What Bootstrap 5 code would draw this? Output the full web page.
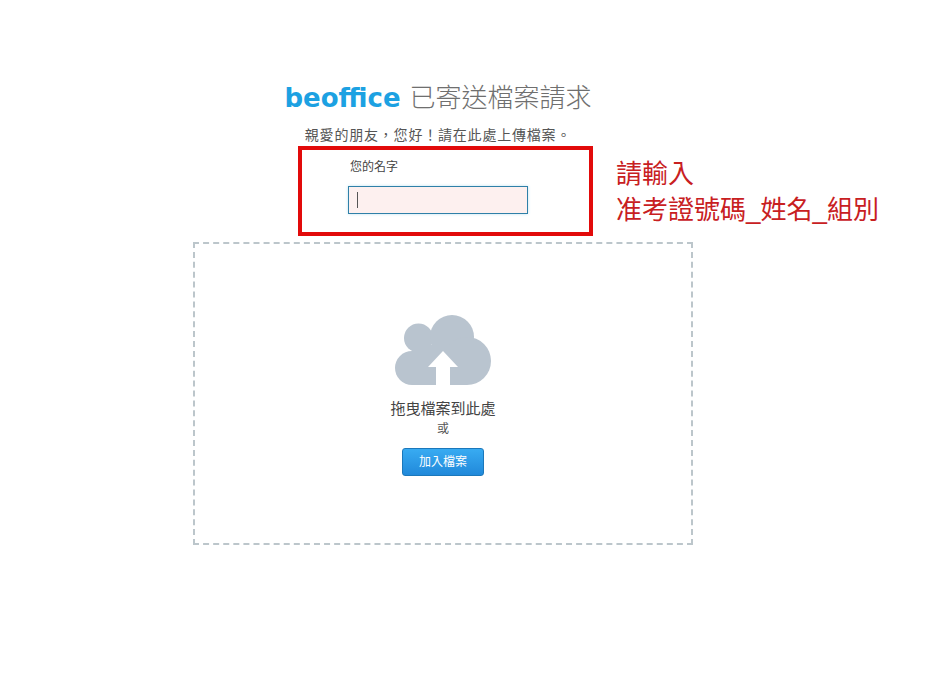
<!DOCTYPE html>
<html lang="zh-Hant">
<head>
<meta charset="utf-8">
<title>beoffice</title>
<link href="https://cdn.jsdelivr.net/npm/bootstrap@5.3.0/dist/css/bootstrap.min.css" rel="stylesheet">
<style>
html,body{height:100%;background:#fff}
body{font-family:"Liberation Sans","Noto Sans CJK TC",sans-serif;color:#444;overflow:hidden}
.sheet{position:relative;width:931px;height:700px;padding:79px 238px 0 193px}
.head-title{font-size:26px;line-height:38px;font-weight:300;color:#6f6f6f;margin:0 10px 0 0;text-align:center}
.brand-word{font-family:"DejaVu Sans",sans-serif;font-weight:700;font-size:26px;color:#1ca1e2;margin-right:9px}
.greet{font-size:14px;letter-spacing:.8px;line-height:20px;color:#555;margin:8px 0 0;padding-right:10px;text-align:center}
.name-zone{height:97px;padding:12px 0 0 155px}
.name-label{display:block;font-size:12px;line-height:20px;margin:0 0 9px 2px;color:#444}
.name-input{position:relative;width:180px;height:28px}
.name-input .form-control{height:28px;width:180px;border:1px solid #2f80a8;border-radius:0;background:#fdf0ef;box-shadow:0 0 3px #bfe3f2;padding:0}
.caret-bar{position:absolute;left:9px;top:6px;width:1px;height:16px;background:#555}
.drop-zone{width:500px;height:303px;border:2px dashed #bcc6cb;padding-top:71px}
.cloud-art{display:block;width:96px;height:70px;margin-bottom:14px}
.drop-text{font-size:15px;line-height:20px;color:#444;margin:0}
.or-text{font-size:12px;line-height:18px;color:#555;margin:1px 0 10px}
.add-btn{width:82px;height:28px;padding:0;font-size:12px;line-height:26px;color:#fff;border:1px solid #1b78bb;border-radius:3px;background:linear-gradient(#38abf2,#2189da)}
.alert-frame{position:absolute;left:298px;top:146px;width:295px;height:90px;border:4px solid #e20a0a;pointer-events:none}
.hint-note{position:absolute;left:616px;top:156px;font-size:26px;line-height:36px;color:#c8201f;white-space:nowrap}
</style>
</head>
<body>
<div class="sheet">
  <h1 class="head-title"><span class="brand-word">beoffice</span>已寄送檔案請求</h1>
  <p class="greet">親愛的朋友&#65292;您好&#65281;請在此處上傳檔案。</p>
  <form class="name-zone">
    <label class="name-label" for="nm">您的名字</label>
    <div class="name-input"><input id="nm" class="form-control" type="text"><span class="caret-bar"></span></div>
  </form>
  <div class="drop-zone d-flex flex-column align-items-center text-center">
    <svg class="cloud-art" viewBox="0 0 96 70" aria-hidden="true">
      <g fill="#b9c4cf">
        <circle cx="23.5" cy="23" r="14.5"/>
        <circle cx="57" cy="22" r="22"/>
        <circle cx="72" cy="46" r="24"/>
        <circle cx="17" cy="53" r="17"/>
        <rect x="17" y="30" width="55" height="40"/>
      </g>
      <path fill="#fff" d="M48 36 L63 52 L55 52 L55 70 L41 70 L41 52 L33 52 Z"/>
    </svg>
    <p class="drop-text">拖曳檔案到此處</p>
    <p class="or-text">或</p>
    <button type="button" class="btn add-btn">加入檔案</button>
  </div>
  <div class="alert-frame"></div>
  <div class="hint-note">請輸入<br>准考證號碼_姓名_組別</div>
</div>
<script src="https://cdn.jsdelivr.net/npm/bootstrap@5.3.0/dist/js/bootstrap.bundle.min.js"></script>
</body>
</html>
